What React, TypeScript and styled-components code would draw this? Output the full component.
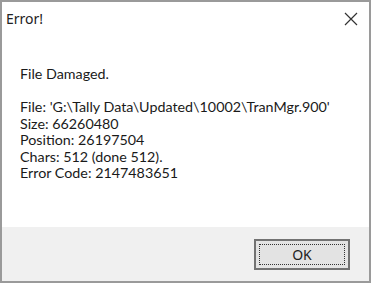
import React from "react";
import styled, { createGlobalStyle } from "styled-components";

const GlobalStyle = createGlobalStyle`
  html, body {
    margin: 0;
    padding: 0;
    background: #ffffff;
  }
  * {
    box-sizing: border-box;
  }
`;

const Window = styled.div`
  width: 371px;
  height: 283px;
  display: flex;
  flex-direction: column;
  background: #ffffff;
  border: 2px solid #9a9a9a;
  font-family: "Noto Sans", "Open Sans", sans-serif;
  color: #1a1a1a;
`;

const TitleBar = styled.div`
  height: 33px;
  display: flex;
  align-items: center;
  justify-content: space-between;
  padding: 0 11px 0 4px;
`;

const Title = styled.span`
  font-size: 14px;
  color: #222;
`;

const CloseButton = styled.div`
  width: 14px;
  height: 14px;
  display: flex;
  align-items: center;
  justify-content: center;
`;

const Body = styled.div`
  flex: 1;
  padding: 31px 18px 0 18px;
`;

const Line = styled.div`
  font-family: Lato, "Noto Sans", sans-serif;
  font-size: 14.3px;
  line-height: 16.5px;
  height: 16.5px;
  white-space: pre;
`;

const Footer = styled.div`
  height: 54px;
  background: #f0f0f0;
  display: flex;
  align-items: center;
  justify-content: flex-end;
  padding-right: 19px;
`;

const OkButton = styled.button`
  width: 96px;
  height: 31px;
  padding: 3px;
  background: #e3e3e3;
  border: 2px solid #727272;
  font-family: "Noto Sans", "Open Sans", sans-serif;
  font-size: 14px;
  color: #222;
  cursor: default;
`;

const FocusRing = styled.span`
  display: flex;
  align-items: center;
  justify-content: center;
  width: 100%;
  height: 100%;
  border: 1px dotted #333;
`;

const lines = [
  "File Damaged.",
  "",
  "File: 'G:\\Tally Data\\Updated\\10002\\TranMgr.900'",
  "Size: 66260480",
  "Position: 26197504",
  "Chars: 512 (done 512).",
  "Error Code: 2147483651",
];

const App = () => {
  return (
    <>
      <GlobalStyle />
      <Window>
        <TitleBar>
          <Title>Error!</Title>
          <CloseButton>
            <svg width="14" height="14" viewBox="0 0 14 14">
              <path d="M1 1 L13 13 M13 1 L1 13" stroke="#333" strokeWidth="1.2" />
            </svg>
          </CloseButton>
        </TitleBar>
        <Body>
          {lines.map((l, i) => (
            <Line key={i}>{l}</Line>
          ))}
        </Body>
        <Footer>
          <OkButton>
            <FocusRing>OK</FocusRing>
          </OkButton>
        </Footer>
      </Window>
    </>
  );
};

export default App;
